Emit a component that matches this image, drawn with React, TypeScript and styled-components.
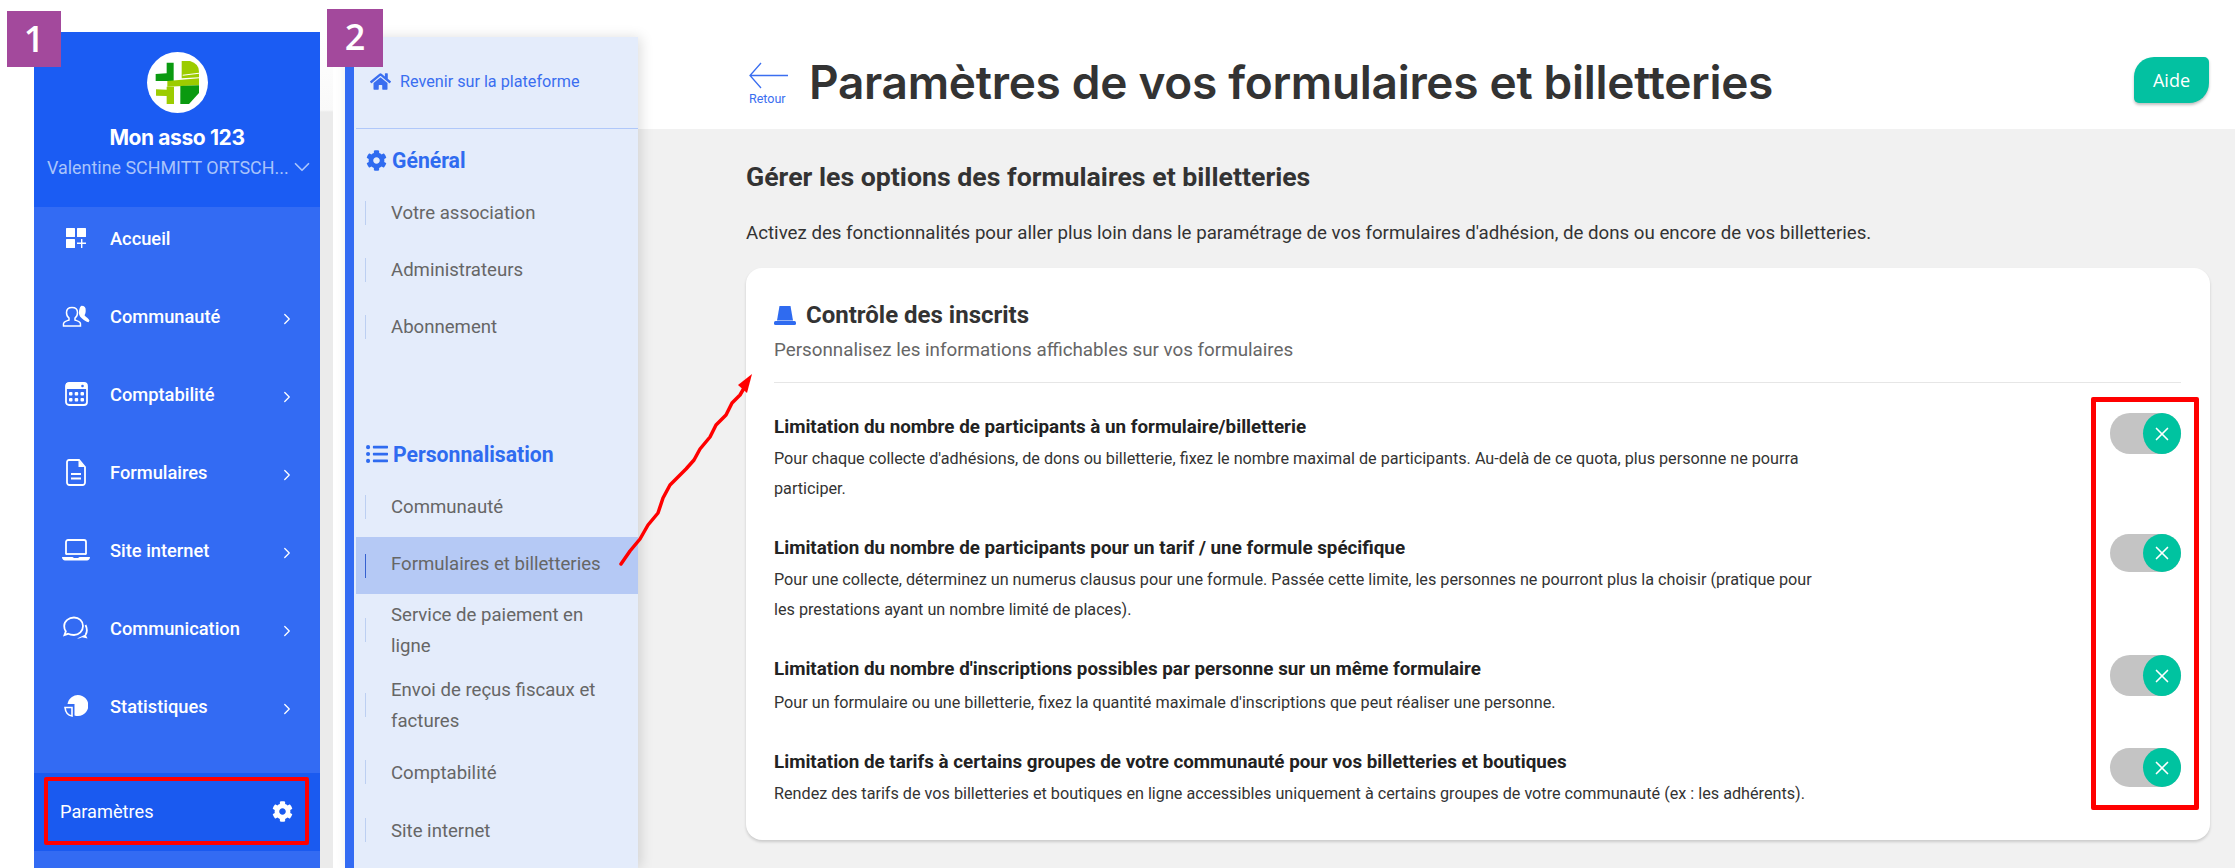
import React from "react";
import styled, { createGlobalStyle } from "styled-components";
import { ChevronDown, ChevronRight, X } from "lucide-react";
import { FaCog, FaHome, FaListUl } from "react-icons/fa";

const Global = createGlobalStyle`
  html, body { margin: 0; padding: 0; background: #fff; }
  * { box-sizing: border-box; }
  body { font-family: Roboto, "Liberation Sans", sans-serif; }
`;

const Page = styled.div`
  position: relative;
  display: flex;
  width: 2235px;
  height: 868px;
  overflow: hidden;
  background: #fff;
`;

const Badge = styled.div<{ $left: number; $top: number; $w: number }>`
  position: absolute;
  left: ${(p) => p.$left}px;
  top: ${(p) => p.$top}px;
  width: ${(p) => p.$w}px;
  height: ${(p) => 67 - p.$top}px;
  background: #a3499c;
  color: #fff;
  font: 600 36px/56px "Open Sans", sans-serif;
  text-align: center;
  z-index: 5;
`;

/* ---------- Sidebar 1 ---------- */
const MainNav = styled.aside`
  flex: none;
  width: 286px;
  margin: 32px 0 0 34px;
  background: #336bf3;
  display: flex;
  flex-direction: column;
`;
const NavHead = styled.div`
  height: 175px;
  padding-top: 20px;
  background: #1b5cf3;
  display: flex;
  flex-direction: column;
  align-items: center;
`;
const LogoDisc = styled.svg`
  width: 61px;
  height: 61px;
  display: block;
`;
const OrgName = styled.div`
  margin-top: 10px;
  font: 700 21px/30px Inter, sans-serif;
  letter-spacing: -0.4px;
  color: #fff;
`;
const UserRow = styled.div`
  display: flex;
  align-items: center;
  width: 100%;
  height: 30px;
  margin-top: -1px;
  padding-left: 13px;
  font-size: 17.9px;
  color: #a9c4fb;
  white-space: nowrap;
  svg { flex: none; }
`;
const NavList = styled.nav`
  flex: none;
  height: 566px;
  display: flex;
  flex-direction: column;
  gap: 16px;
`;
const NavItem = styled.a`
  height: 62px;
  flex: none;
  display: flex;
  align-items: center;
  padding-left: 28px;
  color: #fff;
  font-size: 18.3px;
  font-weight: 500;
`;
const NavIcon = styled.span`
  width: 28px;
  height: 28px;
  margin-right: 20px;
  display: flex;
  align-items: center;
  justify-content: center;
  color: #fff;
`;
const NavLabel = styled.span`
  flex: 1;
`;
const NavChevron = styled.span`
  width: 18px;
  height: 18px;
  margin: 6px 24px 0 0;
  color: #fff;
`;
const NavFoot = styled.div`
  flex: none;
  height: 78px;
  background: #1a5af0;
  padding: 4px 11px 6px 10px;
`;
const FootBox = styled.div`
  height: 68px;
  border: 4px solid #f00;
  border-radius: 2px;
  display: flex;
  align-items: center;
  justify-content: space-between;
  padding: 0 12px;
  color: #fff;
  font-size: 18.2px;
`;
const Gutter = styled.div`
  flex: none;
  width: 13px;
  margin-right: 12px;
  background: linear-gradient(#fff 0, #fff 32px, #f9f9f9 110px, #ebebeb 112px);
`;

/* ---------- Sidebar 2 ---------- */
const SubNav = styled.aside`
  flex: none;
  position: relative;
  z-index: 2;
  width: 293px;
  margin-top: 37px;
  border-left: 9px solid #336bf3;
  background: #e4ecfb;
  box-shadow: 3px 0 12px rgba(0, 0, 0, 0.13);
`;
const BackLink = styled.a`
  height: 92px;
  margin-left: 2px;
  padding: 0 0 2px 14px;
  border-bottom: 1px solid #b0c8fa;
  display: flex;
  align-items: center;
  gap: 9px;
  color: #3a6ef0;
  font-size: 16.2px;
`;
const SubHeading = styled.div<{ $mt: number }>`
  height: 40px;
  margin: ${(p) => p.$mt}px 0 4px 12px;
  display: flex;
  align-items: center;
  gap: 5px;
  color: #2f6bf0;
  font-size: 21.2px;
  font-weight: 700;
`;
const SubItem = styled.a<{ $h: number; $active?: boolean; $mt?: number }>`
  position: relative;
  display: flex;
  align-items: center;
  height: ${(p) => p.$h}px;
  margin: ${(p) => p.$mt ?? 0}px 0 0 2px;
  padding: 2px 30px ${(p) => (p.$active ? 4 : 0)}px 35px;
  font-size: 18.6px;
  line-height: 31px;
  color: #666;
  background: ${(p) => (p.$active ? "#b5c9f5" : "transparent")};
  &::before {
    content: "";
    position: absolute;
    left: 9px;
    top: 50%;
    width: 1px;
    height: 24px;
    margin-top: -12px;
    background: ${(p) => (p.$active ? "#3561d0" : "#bccff2")};
  }
`;

/* ---------- Main ---------- */
const Main = styled.main`
  flex: 1;
  min-width: 0;
  display: flex;
  flex-direction: column;
`;
const Header = styled.header`
  flex: none;
  height: 129px;
  display: flex;
  align-items: flex-start;
  padding: 57px 26px 0 111px;
  background: #fff;
`;
const BackCol = styled.a`
  width: 41px;
  margin: 5px 19px 0 0;
  display: flex;
  flex-direction: column;
  align-items: flex-start;
  color: #3a6ef0;
  font-size: 12.5px;
  line-height: 14px;
  svg { display: block; margin-bottom: 3px; }
`;
const PageTitle = styled.h1`
  flex: 1;
  margin: 0;
  font: 600 46px/50px Inter, sans-serif;
  letter-spacing: -0.3px;
  color: #333;
  white-space: nowrap;
`;
const HelpBtn = styled.button`
  width: 75px;
  height: 46px;
  border: 0;
  border-radius: 20px 5px 20px 5px;
  background: #03c1a1;
  color: #fff;
  font: 500 18px "Open Sans", sans-serif;
  box-shadow: 0 2px 3px rgba(0, 0, 0, 0.25);
`;
const Content = styled.div`
  flex: 1;
  background: #f1f1f1;
  padding: 33px 25px 0 108px;
`;
const SectionTitle = styled.h2`
  margin: 0;
  font-size: 26.7px;
  font-weight: 700;
  line-height: 30px;
  color: #333;
`;
const Intro = styled.p`
  margin: 29px 0 0;
  font-size: 18.7px;
  line-height: 24px;
  color: #333;
  white-space: nowrap;
`;
const Card = styled.section`
  margin-top: 23px;
  height: 572px;
  padding: 32px 29px 31px 28px;
  background: #fff;
  border-radius: 16px;
  box-shadow: 0 2px 3px rgba(0, 0, 0, 0.16);
`;
const CardTitle = styled.h3`
  margin: 0;
  display: flex;
  align-items: center;
  gap: 10px;
  font-size: 24px;
  font-weight: 700;
  line-height: 30px;
  color: #333;
`;
const CardSub = styled.p`
  margin: 5px 0 0;
  font-size: 18.8px;
  line-height: 30px;
  color: #666;
  padding-bottom: 17px;
  border-bottom: 1px solid #e6e6e6;
`;
const Rows = styled.div`
  margin-top: 30px;
  display: flex;
  flex-direction: column;
  gap: 30px;
`;
const Row = styled.div`
  display: flex;
  justify-content: space-between;
  align-items: flex-start;
`;
const RowText = styled.div`
  width: 1040px;
`;
const RowTitle = styled.div`
  font-size: 18.8px;
  font-weight: 700;
  line-height: 28px;
  color: #222;
  white-space: nowrap;
`;
const RowDesc = styled.div<{ $gap: number }>`
  margin-top: ${(p) => p.$gap}px;
  font-size: 16.2px;
  line-height: 30px;
  color: #333;
`;
const Track = styled.div<{ $h: number }>`
  flex: none;
  position: relative;
  width: 71px;
  height: ${(p) => p.$h}px;
  border-radius: 20px;
  background: #c4c4c4;
`;
const Knob = styled.div`
  position: absolute;
  right: 0;
  top: 0;
  bottom: 0;
  width: 38px;
  border-radius: 50%;
  background: #00c3a0;
  color: #fff;
  display: flex;
  align-items: center;
  justify-content: center;
`;
const RedFrame = styled.div`
  position: absolute;
  left: 2091px;
  top: 397px;
  width: 108px;
  height: 413px;
  border: 5px solid #f00;
  border-radius: 2px;
  z-index: 4;
`;
const ArrowOverlay = styled.svg`
  position: absolute;
  left: 610px;
  top: 365px;
  z-index: 4;
`;

const Logo = () => (
  <LogoDisc viewBox="441 156 183 183">
    <circle cx="532.5" cy="247.5" r="91.5" fill="#fff" />
    <path d="M500 188h21v55l-54 0v-21l33-2z" fill="#0a9a10" />
    <path d="M545 183h25q27 8 27 32v17l-52 3z" fill="#9ccc00" />
    <path d="M548 224l49-6v3l-49 6z" fill="#fff" />
    <path d="M502 243l95-8v21l-95 4z" fill="#9ccc00" />
    <path d="M500 260h22v52h-22v-24l-32-1v-19l32 1z" fill="#9ccc00" />
    <path d="M541 258l56-2v23l-30 33h-26z" fill="#0a9a10" />
  </LogoDisc>
);

const icons = {
  home: (
    <svg width="20" height="20" viewBox="0 0 20 20" fill="#fff">
      <rect x="0" y="0" width="9" height="9" rx="0.5" />
      <rect x="11" y="0" width="9" height="9" rx="0.5" />
      <rect x="0" y="11" width="9" height="9" rx="0.5" />
      <path d="M15 11h1.4v3.6H20V16h-3.6v4H15v-4h-4v-1.4h4z" />
    </svg>
  ),
  users: (
    <svg width="28" height="22" viewBox="0 0 28 22" fill="none" stroke="#fff" strokeWidth="1.5">
      <path d="M10 2.500c3.500 0 5.500 2 5.500 5 0 2.500-1 4.500-2.500 5.500v2c1.500.6 4 1.200 5 2.500 .6.800 .6 2 .5 3.500H1.500c-.2-1.500-.2-2.700.5-3.500 1-1.300 3.500-1.900 5-2.500v-2C5.500 12 4.500 10 4.500 7.500c0-3 2-5 5.500-5z" />
      <path d="M19.500 .8c3 0 4.500 2 4.200 4.800 0 2-.4 3.500-1.200 4.700 1.800 2 3.800 3.200 5 5.200l-1 1.800c-2-.4-5-2.400-7-4.400-1-1-2-2-2.500-4C16.800 6 17.500 2 19.500 .8z" fill="#fff" stroke="none" />
    </svg>
  ),
  calc: (
    <svg width="23" height="24" viewBox="0 0 23 24" fill="none">
      <rect x="1" y="1" width="21" height="22" rx="3" stroke="#fff" strokeWidth="1.800" />
      <rect x="1" y="1" width="21" height="6" fill="#fff" />
      <circle cx="17.500" cy="4" r="1.300" fill="#336bf3" />
      <g fill="#fff">
        <rect x="4" y="10" width="3.500" height="3.500" rx="1" />
        <rect x="9.700" y="10" width="3.500" height="3.500" rx="1" />
        <rect x="15.500" y="10" width="3.500" height="3.500" rx="1" />
        <rect x="4" y="16" width="3.500" height="3.500" rx="1" />
        <rect x="9.700" y="16" width="3.500" height="3.500" rx="1" />
        <rect x="15.500" y="16" width="3.500" height="3.500" rx="1" />
      </g>
    </svg>
  ),
  file: (
    <svg width="20" height="27" viewBox="0 0 20 27" fill="none" stroke="#fff" strokeWidth="1.800">
      <path d="M3 1h10l6 7v15.500a2.500 2.500 0 0 1-2.500 2.500H3.500A2.500 2.500 0 0 1 1 23.500V3a2 2 0 0 1 2-2z" />
      <path d="M12.500 1.500v6.500h6z" fill="#fff" stroke="none" />
      <path d="M5 15h10M5 19.500h10" strokeWidth="2" />
    </svg>
  ),
  laptop: (
    <svg width="28" height="22" viewBox="0 0 28 22" fill="none">
      <path d="M4 15.500V3a2 2 0 0 1 2-2h16a2 2 0 0 1 2 2v12.500" stroke="#fff" strokeWidth="1.800" />
      <path d="M4 15h20" stroke="#fff" strokeWidth="1.800" />
      <path d="M0 18h10.500l1.500 1h4l1.500-1H28c0 2-1.500 3.500-3 3.500H3c-1.500 0-3-1.500-3-3.500z" fill="#fff" />
    </svg>
  ),
  chat: (
    <svg width="26" height="24" viewBox="0 0 26 24" fill="none" stroke="#fff" strokeWidth="1.800">
      <path d="M11 1.500c5 0 9 3.500 9 8.500s-4 9-9 9c-2 0-4-.2-6-1.200L1.500 19l1.300-3.600C1.700 14 1.200 12 1.200 10 1.200 5 6 1.500 11 1.500z" />
      <path d="M22.500 9c1.800 3.500 1.500 7.500 0 10" />
      <path d="M14 22.500c2 0 3.500-.3 5-1.200l5.500 1.200-2-4z" fill="#fff" stroke="none" />
    </svg>
  ),
  pie: (
    <svg width="24" height="24" viewBox="0 0 24 24" fill="none">
      <path d="M3.500 10A10.500 10.500 0 1 1 10.500 21.500V10z" fill="#fff" />
      <path d="M1 13.500h7v8.500C4.200 21.500 1.500 18 1 13.500z" stroke="#fff" strokeWidth="1.600" />
    </svg>
  ),
};

const navItems: { label: string; icon: React.ReactNode; sub?: boolean }[] = [
  { label: "Accueil", icon: icons.home },
  { label: "Communauté", icon: icons.users, sub: true },
  { label: "Comptabilité", icon: icons.calc, sub: true },
  { label: "Formulaires", icon: icons.file, sub: true },
  { label: "Site internet", icon: icons.laptop, sub: true },
  { label: "Communication", icon: icons.chat, sub: true },
  { label: "Statistiques", icon: icons.pie, sub: true },
];

const general = [
  { label: "Votre association", h: 57 },
  { label: "Administrateurs", h: 57 },
  { label: "Abonnement", h: 57 },
];
const perso: { label: string; h: number; active?: boolean; mt?: number }[] = [
  { label: "Communauté", h: 57 },
  { label: "Formulaires et billetteries", h: 57, active: true, mt: 2 },
  { label: "Service de paiement en ligne", h: 72 },
  { label: "Envoi de reçus fiscaux et factures", h: 78 },
  { label: "Comptabilité", h: 56 },
  { label: "Site internet", h: 60 },
];

const rows = [
  {
    title: "Limitation du nombre de participants à un formulaire/billetterie",
    gap: 3,
    h: 41,
    desc: "Pour chaque collecte d'adhésions, de dons ou billetterie, fixez le nombre maximal de participants. Au-delà de ce quota, plus personne ne pourra participer.",
  },
  {
    title: "Limitation du nombre de participants pour un tarif / une formule spécifique",
    gap: 3,
    h: 38,
    desc: "Pour une collecte, déterminez un numerus clausus pour une formule. Passée cette limite, les personnes ne pourront plus la choisir (pratique pour les prestations ayant un nombre limité de places).",
  },
  {
    title: "Limitation du nombre d'inscriptions possibles par personne sur un même formulaire",
    gap: 5,
    h: 41,
    desc: "Pour un formulaire ou une billetterie, fixez la quantité maximale d'inscriptions que peut réaliser une personne.",
  },
  {
    title: "Limitation de tarifs à certains groupes de votre communauté pour vos billetteries et boutiques",
    gap: 3,
    h: 39,
    desc: "Rendez des tarifs de vos billetteries et boutiques en ligne accessibles uniquement à certains groupes de votre communauté (ex : les adhérents).",
  },
];

export default function App() {
  return (
    <Page>
      <Global />
      <Badge $left={7} $top={11} $w={54}>1</Badge>
      <Badge $left={327} $top={9} $w={56}>2</Badge>

      <MainNav>
        <NavHead>
          <Logo />
          <OrgName>Mon asso 123</OrgName>
          <UserRow>
            Valentine SCHMITT ORTSCH...
            <ChevronDown size={26} strokeWidth={1.6} />
          </UserRow>
        </NavHead>
        <NavList>
          {navItems.map((n) => (
            <NavItem key={n.label}>
              <NavIcon>{n.icon}</NavIcon>
              <NavLabel>{n.label}</NavLabel>
              {n.sub && (
                <NavChevron>
                  <ChevronRight size={18} strokeWidth={1.7} />
                </NavChevron>
              )}
            </NavItem>
          ))}
        </NavList>
        <NavFoot>
          <FootBox>
            Paramètres
            <FaCog size={21} />
          </FootBox>
        </NavFoot>
      </MainNav>
      <Gutter />

      <SubNav>
        <BackLink>
          <FaHome size={21} />
          Revenir sur la plateforme
        </BackLink>
        <SubHeading $mt={11}>
          <FaCog size={21} />
          Général
        </SubHeading>
        {general.map((g) => (
          <SubItem key={g.label} $h={g.h}>
            {g.label}
          </SubItem>
        ))}
        <SubHeading $mt={79}>
          <FaListUl size={22} />
          Personnalisation
        </SubHeading>
        {perso.map((g) => (
          <SubItem key={g.label} $h={g.h} $active={g.active} $mt={g.mt}>
            <span>{g.label}</span>
          </SubItem>
        ))}
      </SubNav>

      <Main>
        <Header>
          <BackCol>
            <svg width="40" height="27" viewBox="0 0 40 27" fill="none" stroke="#3a6ef0" strokeWidth="1.300">
              <path d="M39 13.500H1M12 1 1 13.500 12 26" />
            </svg>
            Retour
          </BackCol>
          <PageTitle>Paramètres de vos formulaires et billetteries</PageTitle>
          <HelpBtn>Aide</HelpBtn>
        </Header>
        <Content>
          <SectionTitle>Gérer les options des formulaires et billetteries</SectionTitle>
          <Intro>
            Activez des fonctionnalités pour aller plus loin dans le paramétrage de vos formulaires d'adhésion, de dons ou encore de vos billetteries.
          </Intro>
          <Card>
            <CardTitle>
              <svg width="22" height="19" viewBox="0 0 22 19" fill="#2f6bf0">
                <path d="M5.500 0h11l2.500 14.500H3z" />
                <rect x="0" y="15" width="22" height="4" rx="1.500" />
              </svg>
              Contrôle des inscrits
            </CardTitle>
            <CardSub>Personnalisez les informations affichables sur vos formulaires</CardSub>
            <Rows>
              {rows.map((r) => (
                <Row key={r.title}>
                  <RowText>
                    <RowTitle>{r.title}</RowTitle>
                    <RowDesc $gap={r.gap}>{r.desc}</RowDesc>
                  </RowText>
                  <Track $h={r.h}>
                    <Knob>
                      <X size={22} strokeWidth={1.8} />
                    </Knob>
                  </Track>
                </Row>
              ))}
            </Rows>
          </Card>
        </Content>
      </Main>

      <RedFrame />
      <ArrowOverlay width="150" height="205" viewBox="0 0 150 205" fill="none">
        <path
          d="M11 199L20 186 30 174 38 160 48 148 53 133 60 120 68 112 76 104 84 95 90 84 100 72 106 60 116 50 122 38 130 30 137 18"
          stroke="#f00"
          strokeWidth="3.500"
          strokeLinejoin="round"
          strokeLinecap="round"
        />
        <path d="M142 9 128 20l9 8z" fill="#f00" />
      </ArrowOverlay>
    </Page>
  );
}
